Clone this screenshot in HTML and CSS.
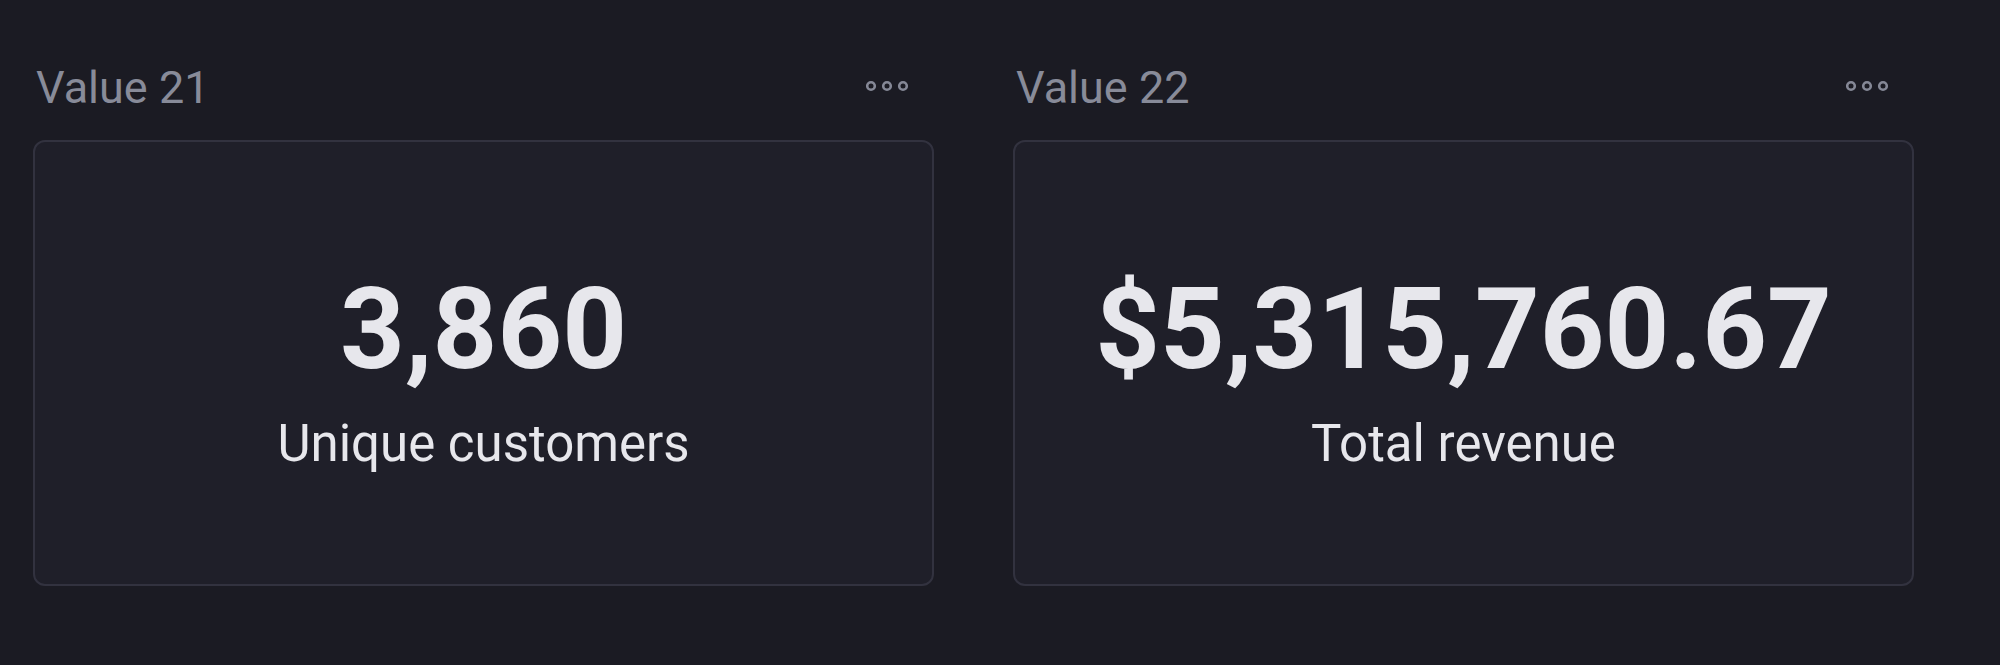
FILE: index.html
```html
<!DOCTYPE html>
<html lang="en">
<head>
<meta charset="utf-8">
<title>Values</title>
<link rel="stylesheet" href="styles.css">
</head>
<body>
<div class="grid">
  <section class="tile">
    <header class="tile-head">
      <span class="tile-title">Value 21</span>
      <svg class="dots" width="44" height="12" viewBox="0 0 44 12" aria-hidden="true">
        <circle cx="5" cy="6" r="3.8"/><circle cx="21" cy="6" r="3.8"/><circle cx="37" cy="6" r="3.8"/>
      </svg>
    </header>
    <div class="card">
      <div class="metric">3,860</div>
      <div class="caption">Unique customers</div>
    </div>
  </section>
  <section class="tile">
    <header class="tile-head">
      <span class="tile-title">Value 22</span>
      <svg class="dots" width="44" height="12" viewBox="0 0 44 12" aria-hidden="true">
        <circle cx="5" cy="6" r="3.8"/><circle cx="21" cy="6" r="3.8"/><circle cx="37" cy="6" r="3.8"/>
      </svg>
    </header>
    <div class="card">
      <div class="metric">$5,315,760.67</div>
      <div class="caption">Total revenue</div>
    </div>
  </section>
</div>
</body>
</html>
```
FILE: styles.css
```css
html, body {
  margin: 0;
  padding: 0;
  background: #1b1b23;
  height: 100%;
}
body {
  font-family: Roboto, "Noto Sans", sans-serif;
  color: #e7e7ec;
}
.grid {
  display: grid;
  grid-template-columns: 901px 901px;
  column-gap: 79px;
  padding: 63px 0 0 33px;
}
.tile {
  display: flex;
  flex-direction: column;
}
.tile-head {
  display: flex;
  align-items: center;
  justify-content: space-between;
  height: 50px;
  padding: 0 24px 0 3px;
  margin-bottom: 27px;
}
.tile-title {
  font-size: 45px;
  line-height: 50px;
  color: #888b99;
}
.dots {
  margin-top: -4px;
}
.dots circle {
  fill: none;
  stroke: #858896;
  stroke-width: 2.6;
}
.card {
  box-sizing: border-box;
  height: 446px;
  border: 2px solid #32323f;
  border-radius: 12px;
  background: #1f1f29;
  display: flex;
  flex-direction: column;
  align-items: center;
  justify-content: center;
  padding-top: 24px;
}
.metric {
  font-size: 113px;
  font-weight: 700;
  line-height: 110px;
  color: #e7e7ec;
}
.caption {
  margin-top: 28px;
  font-size: 51px;
  line-height: 62px;
  color: #e7e7ec;
}
```
